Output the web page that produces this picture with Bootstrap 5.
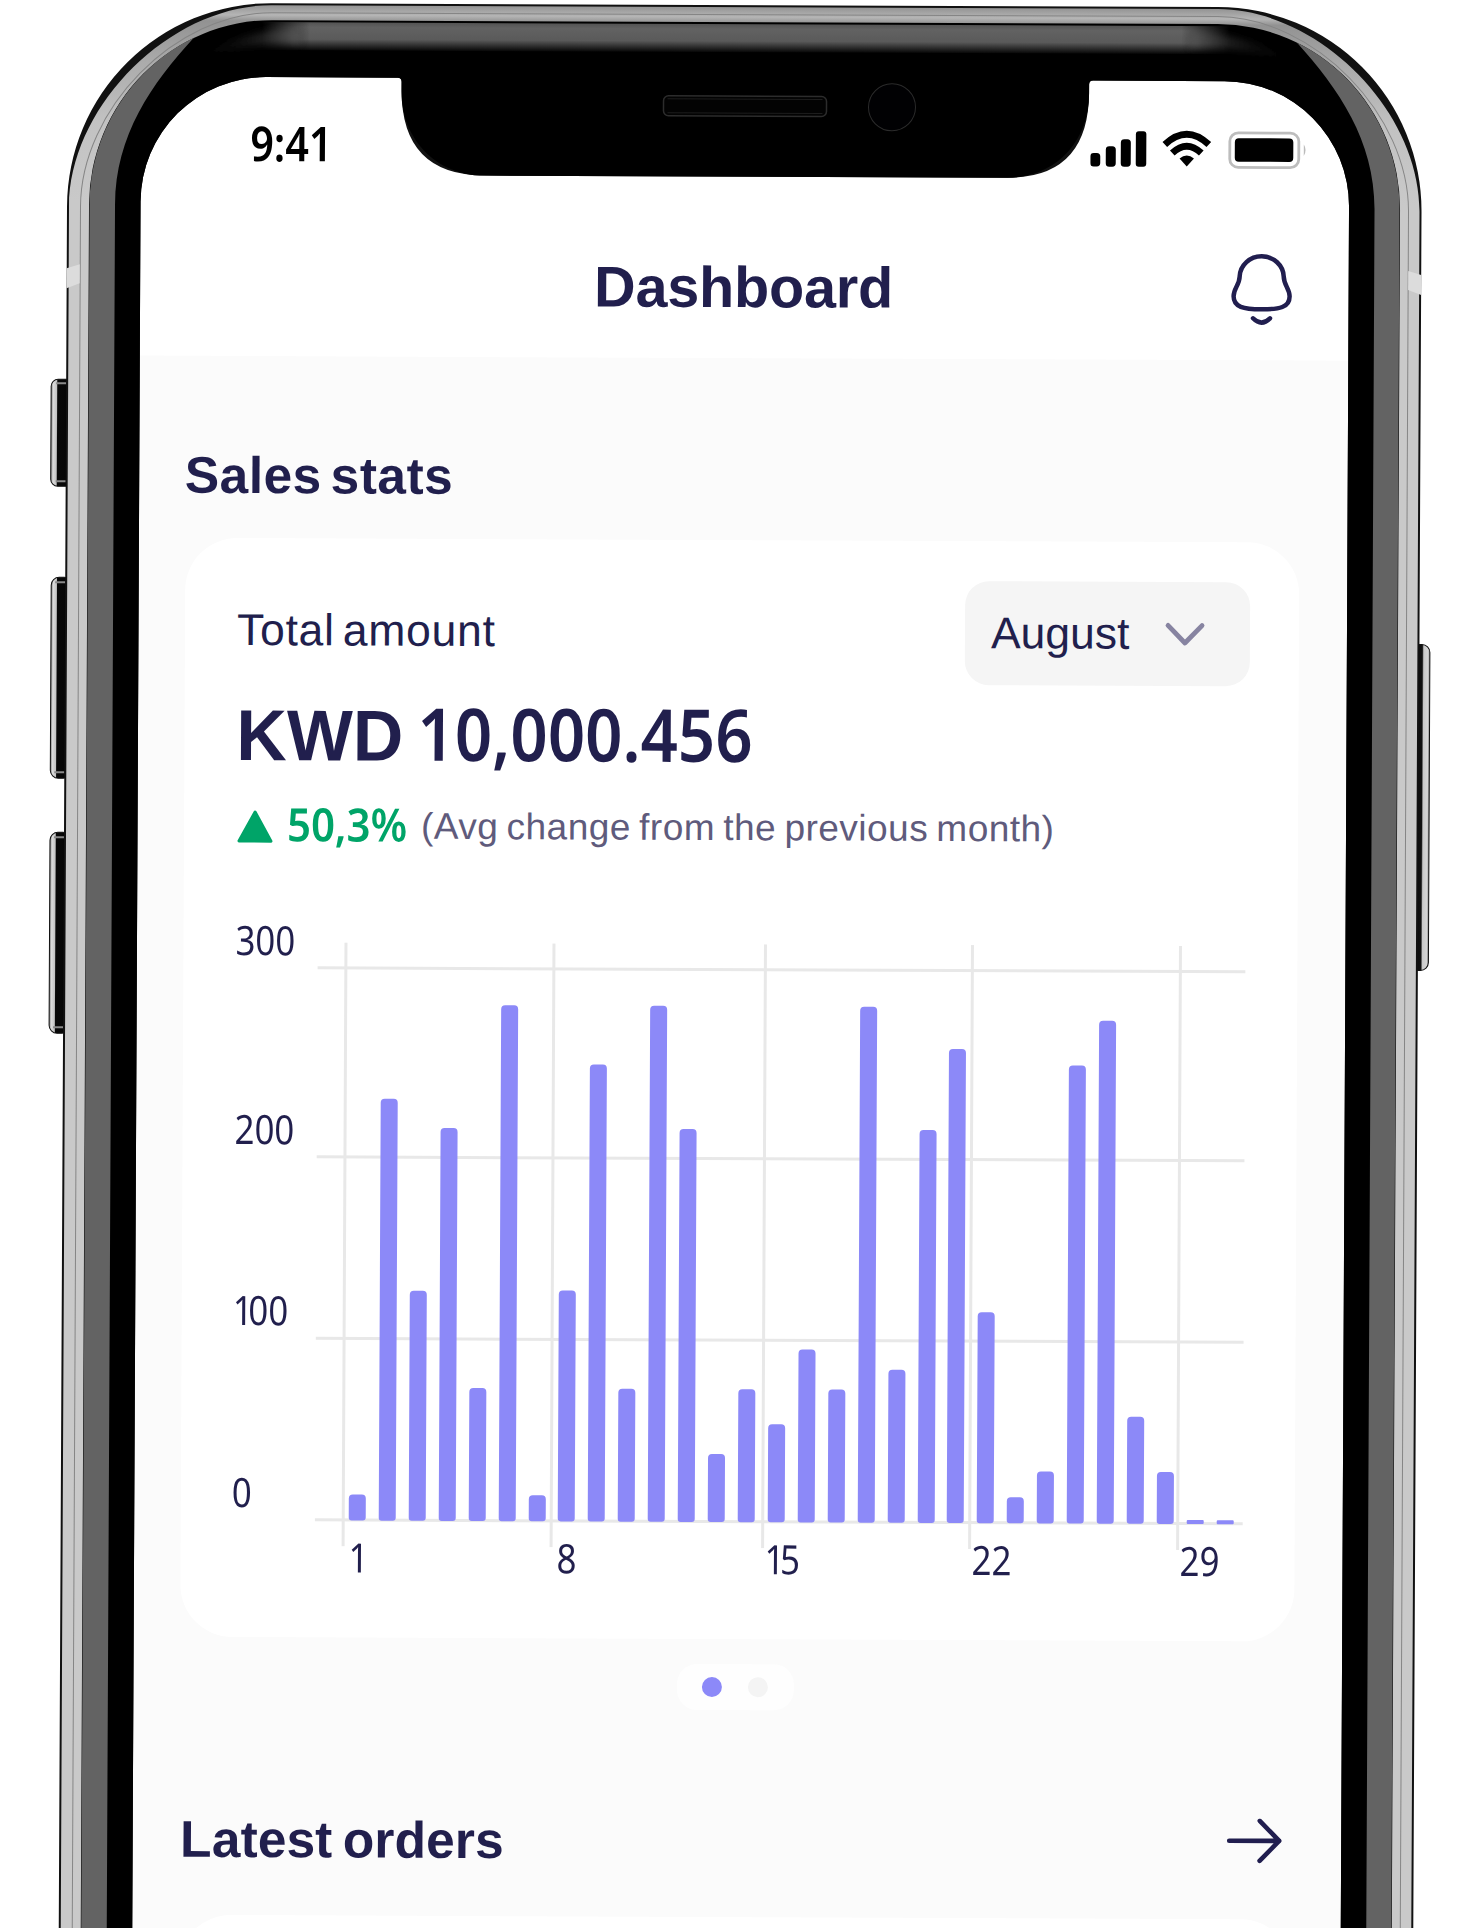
<!DOCTYPE html>
<html lang="en">
<head>
<meta charset="utf-8">
<meta name="viewport" content="width=device-width, initial-scale=1">
<title>Dashboard</title>
<link rel="stylesheet" href="https://cdn.jsdelivr.net/npm/bootstrap@5.3.0/dist/css/bootstrap.min.css">
<style>
  :root { --ink:#211f4d; --muted-ink:#5f5b7c; --bar:#8c89f8; --up:#00a468; }
  html, body { height:1928px; overflow:hidden; background:#fff; }
  body { font-family:"Liberation Sans", Arial, sans-serif; color:var(--ink); }
  .device { width:1476px; height:1945px; transform-origin:0 0; transform:matrix(1,.0042,-.0048,1,0,0); }
  .device-frame { left:0; top:0; pointer-events:none; overflow:visible; }
  .screen { margin-left:141px; width:1209px; padding-top:76px; height:1945px; overflow:hidden; }
  .num { font-family:"Noto Sans", "Open Sans", sans-serif; }
  .fit { display:inline-block; transform-origin:0 50%; white-space:nowrap; }
  .tight { letter-spacing:-5px; }

  .status-bar { height:104px; padding:36px 41px 0 110px; }
  .clock { font-size:48px; line-height:60px; font-weight:600; color:#000; transform:scaleX(.86); }
  .status-icons { margin-top:10px; }

  .title-bar { height:179px; margin-top:-4px; padding:72px 55px 0 54px; display:grid; grid-template-columns:1fr auto 1fr; }
  .title-bar h1 { font-size:57.5px; line-height:72px; font-weight:700; letter-spacing:-.15px; }

  .content { background:#fbfbfb; padding:90px 48px 0 47px; height:1600px; }
  .content h2 { font-size:51.5px; line-height:60px; font-weight:700; }
  .content .sales-title { margin:-1px 0 33px -1px; letter-spacing:.5px; word-spacing:-6px; }
  .content .orders-title { margin:0 0 0 1px; letter-spacing:.1px; word-spacing:-4px; }
  .stats-card { height:1099px; border-radius:52px; background:#fff; padding:40px 49px 0 51px; }
  .label-total { font-size:44.5px; line-height:56px; margin:24px 0 0 1px; letter-spacing:.75px; word-spacing:-5px; }
  .month { width:285px; height:104px; border-radius:24px; background:#f5f5f5; padding:0 44px 0 26px; font-size:44.5px; line-height:58px; }

  .amount { height:84px; margin:10px 0 0 1px; line-height:80px; }
  .amount-cur { font-size:72px; font-weight:700; width:181px; transform:scaleX(.97); }
  .amount-val { font-size:73px; font-weight:600; transform:scaleX(.895); }
  .change { height:60px; margin:17px 0 0 2px; line-height:60px; }
  .change-pct { font-size:46px; font-weight:600; color:var(--up); width:134px; transform:scaleX(.91); }
  .change-note { font-size:37px; color:var(--muted-ink); white-space:nowrap; letter-spacing:.48px; word-spacing:-2.500px; position:relative; top:-3px; }
  .tri { width:50px; }

  .chart { margin-top:62px; font-size:40.5px; line-height:50px; }
  .y-axis { width:83px; }
  .y-axis span, .x-axis span { transform:scaleX(.86); transform-origin:0 50%; }
  .y-axis > span:nth-child(-n+2) { margin-left:1px; }
  .plot { width:929px; height:604px; margin-top:27px; }
  .bars { height:578px; padding:0 10px 0 34px; }
  .bars i { width:17px; background:var(--bar); border-radius:4px 4px 3px 3px; position:relative; }
  .bars i.flat { border-radius:1px; }
  .x-axis { margin:-14px 0 0 117px; }
  .x-axis span { flex:0 0 207.8px; }

  .pager { width:117px; height:46px; border-radius:20px; background:#fefefe; margin:25px auto 0; gap:25.5px; position:relative; left:-2px; }
  .pager b { width:20px; height:20px; border-radius:50%; background:#f4f4f4; }
  .pager b.on { background:var(--bar); }
  .orders-head { margin-top:101px; padding-right:10px; }
  .orders-card { margin-top:46px; height:200px; border-radius:52px; background:#fff; }
</style>
</head>
<body>
<div class="device position-relative">
  <main class="screen">
    <div class="status-bar d-flex justify-content-between align-items-start">
      <span class="clock num fit">9:41</span>
      <svg class="status-icons" width="218" height="50" viewBox="1090.5 122 218 50">
        <g fill="#000">
          <rect x="1090.5" y="148.5" width="10" height="13.5" rx="3.5"/>
          <rect x="1106" y="141.500" width="10" height="20.500" rx="3.5"/>
          <rect x="1121" y="134.500" width="10" height="27.500" rx="3.5"/>
          <rect x="1136" y="126.500" width="10.500" height="35.500" rx="3"/>
          <path d="M1187 161.500L1179.800 153.500Q1187 147.500 1194.200 153.500Z"/>
          <rect x="1235" y="133" width="58.500" height="23.500" rx="4"/>
        </g>
        <g fill="none" stroke="#000" stroke-width="6.800">
          <path d="M1165 139.500Q1187 119 1209 139.500"/>
          <path d="M1172.500 148Q1187 134.500 1201.500 148"/>
        </g>
        <rect x="1230" y="127.700" width="69" height="34.500" rx="8.500" fill="none" stroke="#bdbdbd" stroke-width="2.800"/>
        <path d="M1304 139Q1307.500 144.500 1304 150.500Z" fill="#bbb"/>
      </svg>
    </div>
    <header class="title-bar">
      <span></span>
      <h1 class="m-0">Dashboard</h1>
      <svg class="ms-auto" width="64" height="76" viewBox="0 0 64 76" fill="none" stroke="#211e4f" stroke-width="4.500" stroke-linecap="round">
        <path d="M32 3C44 3 53.500 12 54 23C54.200 32 60 35 60 43C60 54 50 56 32 56C14 56 4 54 4 43C4 35 9.800 32 10 23C10.500 12 20 3 32 3Z"/>
        <path d="M23.500 65Q32 73.500 40.500 65"/>
      </svg>
    </header>

    <section class="content">
      <h2 class="sales-title">Sales stats</h2>
      <div class="stats-card">
        <div class="d-flex justify-content-between">
          <div class="label-total">Total amount</div>
          <div class="month d-flex align-items-center justify-content-between">
            <span>August</span>
            <svg width="42" height="26" viewBox="0 0 42 26" fill="none" stroke="#8784a1" stroke-width="4.800" stroke-linecap="round" stroke-linejoin="round"><path d="M4 4.500L21 22L38 4.500"/></svg>
          </div>
        </div>
        <div class="amount d-flex align-items-baseline">
          <span class="amount-cur fit">KWD</span><span class="amount-val num fit">10,000.456</span>
        </div>
        <div class="change d-flex align-items-baseline">
          <span class="tri"><svg class="d-inline-block" style="vertical-align:-2px" width="36" height="33" viewBox="0 0 36 33"><path d="M18 2L34 31H2Z" fill="#00a468" stroke="#00a468" stroke-width="3" stroke-linejoin="round"/></svg></span>
          <span class="change-pct num fit">50,3%</span>
          <span class="change-note">(Avg change from the previous month)</span>
        </div>

        <div class="chart">
          <div class="d-flex">
            <div class="y-axis num d-flex flex-column">
              <span style="height:189px">300</span>
              <span style="height:181px">200</span>
              <span style="height:182px"><span class="tight">1</span>00</span>
              <span>0</span>
            </div>
            <div class="plot position-relative">
              <svg class="position-absolute top-0 start-0" width="929" height="604" stroke="#e8e8e8" stroke-width="3">
                <path d="M0 25.500H928M0 214.500H928M0 396H928M0 577.500H928"/>
                <path d="M28.500 0V604M236.500 0V604M448 0V604M655 0V604M863 0V604"/>
              </svg>
              <div class="bars d-flex align-items-end justify-content-between">
                <i style="height:26px"></i><i style="height:422px"></i><i style="height:230px"></i><i style="height:393px"></i><i style="height:133px"></i><i style="height:516px"></i><i style="height:26px"></i><i style="height:231px"></i><i style="height:457px"></i><i style="height:133px"></i><i style="height:516px"></i><i style="height:393px"></i><i style="height:68px"></i><i style="height:133px"></i><i style="height:98px"></i><i style="height:173px"></i><i style="height:133px"></i><i style="height:516px"></i><i style="height:153px"></i><i style="height:393px"></i><i style="height:474px"></i><i style="height:211px"></i><i style="height:26px"></i><i style="height:52px"></i><i style="height:458px"></i><i style="height:503px"></i><i style="height:107px"></i><i style="height:52px"></i><i class="flat" style="height:4px"></i><i class="flat" style="height:4px"></i>
              </div>
            </div>
          </div>
          <div class="x-axis num d-flex"><span>1</span><span>8</span><span><b class="tight fw-normal">1</b>5</span><span>22</span><span>29</span></div>
        </div>
      </div>

      <div class="pager d-flex align-items-center justify-content-center"><b class="on"></b><b></b></div>

      <div class="orders-head d-flex justify-content-between align-items-center">
        <h2 class="orders-title">Latest orders</h2>
        <svg width="58" height="50" viewBox="0 0 58 50" fill="none" stroke="#211e4f" stroke-width="4.600" stroke-linecap="round" stroke-linejoin="round"><path d="M4 22.500H54M34.500 2.500L54 22.500L34.500 42.500"/></svg>
      </div>
      <div class="orders-card"></div>
    </section>
  </main>

  <svg class="device-frame position-absolute" width="1476" height="1945" viewBox="0 0 1476 1945">
    <defs>
      <linearGradient id="topGray" x1="0" y1="20" x2="0" y2="50" gradientUnits="userSpaceOnUse">
        <stop offset="0" stop-color="#505050"/><stop offset=".2" stop-color="#626262"/><stop offset=".6" stop-color="#5a5a5a"/><stop offset="1" stop-color="#000"/>
      </linearGradient>
      <linearGradient id="fadeL" x1="185" x2="300" y1="0" y2="0" gradientUnits="userSpaceOnUse"><stop offset="0" stop-color="#000" stop-opacity="0"/><stop offset="1" stop-color="#5c5c5c"/></linearGradient>
      <linearGradient id="fadeR" x1="1307" x2="1190" y1="0" y2="0" gradientUnits="userSpaceOnUse"><stop offset="0" stop-color="#000" stop-opacity="0"/><stop offset="1" stop-color="#5c5c5c"/></linearGradient>
      <linearGradient id="ends" x1="262" x2="1230" y1="0" y2="0" gradientUnits="userSpaceOnUse"><stop offset="0" stop-color="#000"/><stop offset=".05" stop-color="#fff"/><stop offset=".95" stop-color="#fff"/><stop offset="1" stop-color="#000"/></linearGradient>
      <mask id="stripEnds" maskUnits="userSpaceOnUse" x="250" y="10" width="1000" height="60"><rect x="250" y="10" width="1000" height="60" fill="url(#ends)"/></mask>
      <linearGradient id="metal" x1="0" y1="2" x2="0" y2="200" gradientUnits="userSpaceOnUse">
        <stop offset="0" stop-color="#8d8d8d"/><stop offset=".06" stop-color="#b5b5b5"/><stop offset=".09" stop-color="#929292"/><stop offset=".3" stop-color="#ababab"/><stop offset=".6" stop-color="#c2c2c2"/><stop offset="1" stop-color="#c9c9c9"/>
      </linearGradient>
      <linearGradient id="key" x1="0" x2="1" y1="0" y2="0"><stop offset="0" stop-color="#777"/><stop offset=".1" stop-color="#dcdcdc"/><stop offset=".25" stop-color="#c4c4c4"/><stop offset=".3" stop-color="#080808"/><stop offset="1" stop-color="#050505"/></linearGradient>
      <linearGradient id="keyR" x1="0" x2="1" y1="0" y2="0"><stop offset="0" stop-color="#050505"/><stop offset=".58" stop-color="#111"/><stop offset=".66" stop-color="#c9c9c9"/><stop offset=".9" stop-color="#d5d5d5"/><stop offset="1" stop-color="#777"/></linearGradient>
      <filter id="soft" x="-20%" y="-60%" width="140%" height="220%"><feGaussianBlur stdDeviation="3.500"/></filter>
    </defs>

    <!-- side keys -->
    <g stroke="#111" stroke-width="1">
      <rect x="53" y="379" width="22" height="107" rx="7" fill="url(#key)"/>
      <rect x="54" y="577" width="21" height="201" rx="8" fill="url(#key)"/>
      <rect x="54" y="832" width="21" height="201" rx="8" fill="url(#key)"/>
      <rect x="1415" y="638.500" width="18" height="326" rx="8" fill="url(#keyR)"/>
    </g>
    <g stroke="#8a8a8a" stroke-width="2"><path d="M58 383H68M58 481H68M58 582H68M58 772H68M58 837H68M58 1027H68"/></g>

    <!-- case edge, steel band, bezel -->
    <path fill="#111" fill-rule="evenodd" d="M68 1960V206A204 204 0 0 1 272 2H1218A204 204 0 0 1 1422.500 206V1960H1350V201A125 125 0 0 0 1225 76H1093.500Q1089.500 76 1089.500 80V88Q1089.500 173.500 1008 173.500H485Q402 173.500 402 88V80Q402 76 398 76H266.500A125 125 0 0 0 141.500 201V1960Z"/>
    <path fill="url(#metal)" d="M70 1960V206C70 105 171 4 272 4H1218C1319 4 1420.500 105 1420.500 206V1960H1360V201A135 135 0 0 0 1225 66H266A135 135 0 0 0 131 201V1960Z"/>
    <path fill="none" stroke="#858585" stroke-width="1" d="M81.500 1960V206C81.500 109 175 12 272 11.500H1218C1315 12 1409.500 109 1409.500 206V1960"/>
    <path fill="#000" d="M90 1960V204A183 185 0 0 1 273 19H1218A183 185 0 0 1 1401 204V1960H1350V201A125 125 0 0 0 1225 76H1093.500Q1089.500 76 1089.500 80V90C1089.500 137 1056 173.500 1008 173.500H485C437 173.500 402 137 402 90V80Q402 76 398 76H266.500A125 125 0 0 0 141.500 201V1960Z"/>
    <path fill="#636363" d="M90.500 1960V204A183 185 0 0 1 194 37C152 83 116 135 116 204V1960Z"/>
    <path fill="#636363" d="M1400.500 1960V204A183 185 0 0 0 1297 37C1339 83 1375.500 135 1375.500 204V1960Z"/>
    <rect x="262" y="21" width="968" height="28" fill="url(#topGray)" mask="url(#stripEnds)"/>
    <g filter="url(#soft)" opacity=".75">
      <path d="M300 26V42Q232 42 190 62Q228 32 300 26Z" fill="url(#fadeL)"/>
      <path d="M1190 26V42Q1260 42 1302 62Q1264 32 1190 26Z" fill="url(#fadeR)"/>
    </g>

    <!-- antenna breaks -->
    <path d="M68 268L81 264V283L68 288Z" fill="#dcdcdc"/>
    <path d="M1409.500 265L1422.500 269V289L1409.500 284Z" fill="#dcdcdc"/>

    <!-- speaker and camera -->
    <rect x="664" y="93" width="163" height="20" rx="5" fill="#030303" stroke="#2c2c2c" stroke-width="1.500"/>
    <path d="M668 96H823M668 110H823" stroke="#1d1d1d"/>
    <circle cx="892.500" cy="103.500" r="23.500" fill="#010103" stroke="#2b2b2b" stroke-width="1"/>
  </svg>
</div>
<script src="https://cdn.jsdelivr.net/npm/bootstrap@5.3.0/dist/js/bootstrap.bundle.min.js"></script>
</body>
</html>
